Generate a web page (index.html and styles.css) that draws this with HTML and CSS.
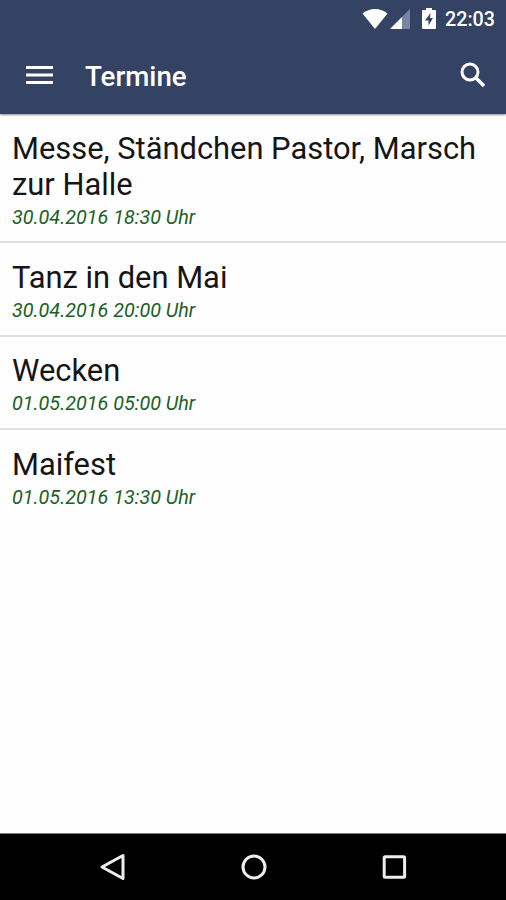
FILE: index.html
```html
<!DOCTYPE html>
<html lang="de">
<head>
    <meta charset="UTF-8">
    <title>Termine</title>
    <link rel="stylesheet" href="styles.css">
</head>
<body>
    <header class="header">
        <div class="status">
            <svg class="wifi" width="26" height="20" viewBox="0 0 26 20"><path d="M0.5 4.5Q6 0 13 0t12.500 4.500L13 20z" fill="#fff"/></svg>
            <svg class="signal" width="20" height="20" viewBox="0 0 20 20"><path d="M20 0v20H0z" fill="#7a86a0"/><path d="M12 8v12H0z" fill="#fff"/></svg>
            <svg class="battery" width="14" height="21" viewBox="0 0 14 21"><path d="M4 0h6v2h3q1 0 1 1v17q0 1-1 1H1q-1 0-1-1V3q0-1 1-1h3z" fill="#fff"/><path d="M8.500 5L3 12.500h3.500V17.500L11 10H8z" fill="#344264"/></svg>
            <span class="clock">22:03</span>
        </div>
        <div class="toolbar">
            <svg class="menu" width="27" height="20" viewBox="0 0 27 20"><path d="M0 2.500h27M0 10h27M0 17.500h27" stroke="#fff" stroke-width="3"/></svg>
            <h1>Termine</h1>
            <svg class="search" width="26" height="26" viewBox="0 0 26 26" fill="none" stroke="#fff"><circle cx="10" cy="10" r="8" stroke-width="3"/><path d="M15.500 15.500L24 24" stroke-width="3.600"/></svg>
        </div>
    </header>
    <main class="list">
        <div class="item">
            <h2>Messe, Ständchen Pastor, Marsch zur Halle</h2>
            <p>30.04.2016 18:30 Uhr</p>
        </div>
        <div class="item">
            <h2>Tanz in den Mai</h2>
            <p>30.04.2016 20:00 Uhr</p>
        </div>
        <div class="item">
            <h2>Wecken</h2>
            <p>01.05.2016 05:00 Uhr</p>
        </div>
        <div class="item">
            <h2>Maifest</h2>
            <p>01.05.2016 13:30 Uhr</p>
        </div>
    </main>
    <nav class="navbar">
        <svg width="28" height="30" viewBox="0 0 28 30"><path d="M24 3.500v23L3 15z"/></svg>
        <svg width="28" height="30" viewBox="0 0 28 30"><circle cx="14" cy="15" r="11"/></svg>
        <svg width="28" height="30" viewBox="0 0 28 30"><rect x="4.200" y="4.800" width="20.400" height="20.400" rx="1"/></svg>
    </nav>
</body>
</html>
```
FILE: styles.css
```css
body {
    margin: 0;
    height: 900px;
    display: flex;
    flex-direction: column;
    overflow: hidden;
    background-color: #fefefe;
    font-family: Roboto, sans-serif;
}
h1, h2, p {
    margin: 0;
}
svg {
    display: block;
    flex: none;
}
.header {
    height: 114px;
    background-color: #344264;
    color: #fff;
    box-shadow: 0 1px 2px rgba(0, 0, 0, 0.45);
}
.status {
    height: 38px;
    padding-right: 11px;
    display: flex;
    align-items: center;
    justify-content: flex-end;
}
.wifi, .signal, .battery {
    margin-bottom: 1px;
}
.signal {
    margin-left: 2px;
}
.battery {
    margin-left: 12px;
}
.clock {
    margin-left: 9px;
    font-size: 19.700px;
    font-weight: 500;
}
.toolbar {
    height: 76px;
    padding: 0 20px 0 26px;
    display: flex;
    align-items: center;
}
.menu, .search {
    margin-bottom: 3px;
}
.toolbar h1 {
    flex: 1;
    margin-left: 32px;
    font-size: 27.700px;
    font-weight: 500;
}
.item {
    padding: 16.800px 12px 12px;
    border-bottom: 2px solid #e0e0e0;
}
.item:last-child {
    border-bottom: none;
}
.item h2 {
    font-size: 30.870px;
    line-height: 36px;
    font-weight: 400;
    color: #151515;
}
.item p {
    margin-top: 3px;
    font-size: 19.780px;
    line-height: 23.500px;
    font-style: italic;
    color: #1c6024;
}
.navbar {
    height: 66px;
    margin-top: auto;
    padding-left: 1px;
    display: flex;
    align-items: center;
    justify-content: center;
    gap: 112.500px;
    border-top: 1px solid #777;
    background-color: #000;
}
.navbar svg {
    fill: none;
    stroke: #eee;
    stroke-width: 3;
    stroke-linejoin: round;
}
```
